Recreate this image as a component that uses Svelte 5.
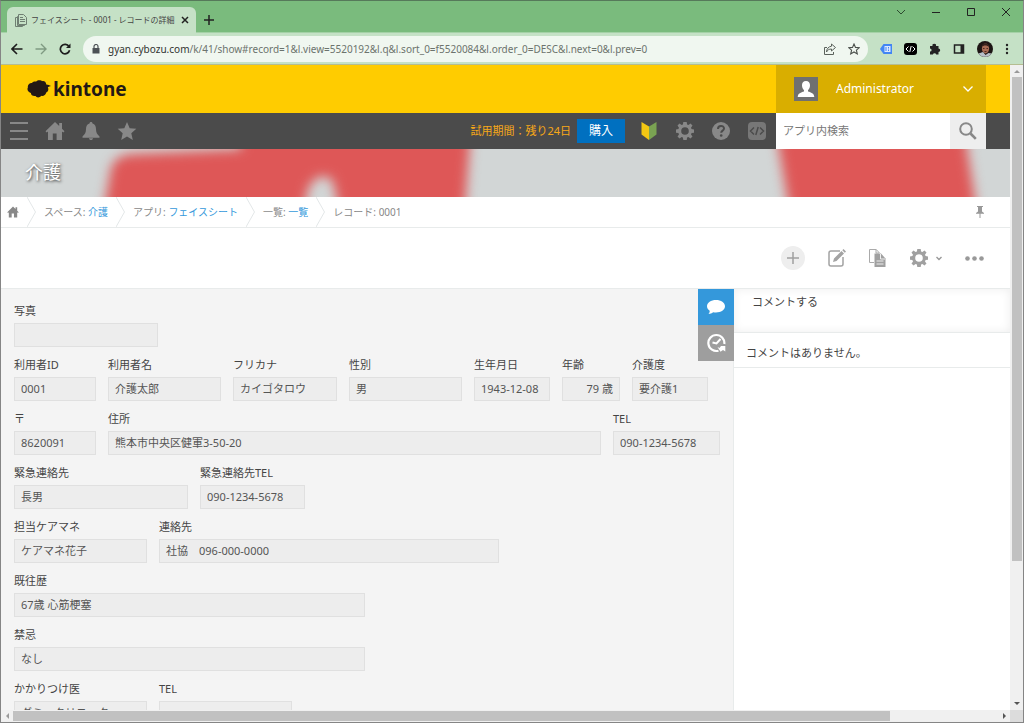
<script>
  const rows = [
    [{ id: 'photo', label: '写真', value: '', width: 144 }],
    [
      { id: 'uid', label: '利用者ID', value: '0001', width: 82 },
      { id: 'name', label: '利用者名', value: '介護太郎', width: 113 },
      { id: 'kana', label: 'フリカナ', value: 'カイゴタロウ', width: 104 },
      { id: 'sex', label: '性別', value: '男', width: 113 },
      { id: 'birth', label: '生年月日', value: '1943-12-08', width: 76 },
      { id: 'age', label: '年齢', value: '79 歳', width: 58, right: true },
      { id: 'level', label: '介護度', value: '要介護1', width: 76 }
    ],
    [
      { id: 'zip', label: '〒', value: '8620091', width: 82 },
      { id: 'address', label: '住所', value: '熊本市中央区健軍3-50-20', width: 493 },
      { id: 'tel', label: 'TEL', value: '090-1234-5678', width: 107 }
    ],
    [
      { id: 'emergency', label: '緊急連絡先', value: '長男', width: 174 },
      { id: 'emergency-tel', label: '緊急連絡先TEL', value: '090-1234-5678', width: 105 }
    ],
    [
      { id: 'manager', label: '担当ケアマネ', value: 'ケアマネ花子', width: 133 },
      { id: 'contact', label: '連絡先', value: '社協　096-000-0000', width: 340 }
    ],
    [{ id: 'history', label: '既往歴', value: '67歳 心筋梗塞', width: 351 }],
    [{ id: 'taboo', label: '禁忌', value: 'なし', width: 351 }],
    [
      { id: 'doctor', label: 'かかりつけ医', value: 'ダミークリニック', width: 133 },
      { id: 'doctor-tel', label: 'TEL', value: '', width: 133 }
    ]
  ];
  const crumbs = [
    { label: 'スペース: ', link: '介護' },
    { label: 'アプリ: ', link: 'フェイスシート' },
    { label: '一覧: ', link: '一覧' },
    { label: 'レコード: 0001' }
  ];
</script>

{#snippet gear(size)}
  <svg width={size} height={size} viewBox="0 0 20 20" aria-hidden="true">
    <path fill="currentColor" fill-rule="evenodd" d="M8.300 1h3.400l.4 2.500 1.300.6 2.100-1.500 2 2-1.500 2.100.6 1.300 2.400.4v3.300l-2.400.4-.6 1.300 1.500 2.100-2 2-2.100-1.500-1.300.6-.4 2.400H8.300l-.4-2.400-1.300-.6-2.100 1.500-2-2L4 13.400l-.6-1.300-2.400-.4V8.400L3.400 8 4 6.700 2.500 4.600l2-2L6.600 4.100l1.300-.6zM10 6.200a3.800 3.800 0 1 0 0 7.600 3.800 3.800 0 0 0 0-7.600z" />
  </svg>
{/snippet}

{#snippet house(size)}
  <svg width={size} height={size} viewBox="0 0 20 20" aria-hidden="true">
    <path fill="currentColor" d="M10 1 .5 10.300l1.200 1.200L3 10.400V19h4.800v-6.500h3.800V19H17v-8.600l1.300 1.100 1.200-1.200L17 7.800V2h-2.800v3.100z" />
  </svg>
{/snippet}

<div class="window">
  <div class="tabstrip">
    <div class="tab">
      <svg width="12" height="13" viewBox="0 0 12 13" fill="none" stroke="#6f7f72"><path d="M3.500.5h5l3 3v7h-8zM3.500 2.500h-1v9h7v-1M2.500 3.500h-2v9h7v-1M5 3.500h3M5 5.500h5M5 7.500h5" /></svg>
      <span class="tab-title">フェイスシート - 0001 - レコードの詳細</span>
      <button aria-label="タブを閉じる"><svg width="8" height="8" viewBox="0 0 8 8" stroke="#222" stroke-width="1.500"><path d="m1 1 6 6M7 1 1 7" /></svg></button>
    </div>
    <button class="new-tab" aria-label="新しいタブ"><svg width="10" height="10" viewBox="0 0 10 10" stroke="#222" stroke-width="1.500"><path d="M5 0v10M0 5h10" /></svg></button>
    <div class="window-buttons">
      <button aria-label="タブを検索"><svg width="10" height="10" viewBox="0 0 10 10" fill="none" stroke="#2d4a30"><path d="m1 3 4 4 4-4" /></svg></button>
      <button aria-label="最小化"><svg width="10" height="10" viewBox="0 0 10 10" stroke="#222"><path d="M1 5.500h8" /></svg></button>
      <button aria-label="最大化"><svg width="10" height="10" viewBox="0 0 10 10" fill="none" stroke="#222"><path d="M1.500 1.500h7v7h-7z" /></svg></button>
      <button aria-label="閉じる"><svg width="10" height="10" viewBox="0 0 10 10" stroke="#222"><path d="m1 1 8 8M9 1 1 9" /></svg></button>
    </div>
  </div>

  <div class="toolbar">
    <button aria-label="戻る"><svg width="12" height="12" viewBox="0 0 12 12" fill="none" stroke="#1d1d1d" stroke-width="1.600"><path d="M11.500 6H1.500M6 1 1 6l5 5" /></svg></button>
    <button aria-label="進む"><svg width="12" height="12" viewBox="0 0 12 12" fill="none" stroke="#7f9a82" stroke-width="1.400"><path d="M.5 6h10M6 1l5 5-5 5" /></svg></button>
    <button aria-label="再読み込み"><svg width="12" height="12" viewBox="0 0 12 12" fill="none" stroke="#1d1d1d" stroke-width="1.700"><path d="M10 3.500A4.700 4.700 0 1 0 10.600 7.300" /><path d="M11.500.5v4.600H7z" fill="#1d1d1d" stroke="none" /></svg></button>
    <div class="omnibox">
      <svg width="8" height="10" viewBox="0 0 8 10"><path d="M.5 4h7v5.500h-7z" fill="#4d5156" /><path d="M2 4V2.500a2 2 0 0 1 4 0V4" fill="none" stroke="#4d5156" stroke-width="1.200" /></svg>
      <span class="url"><b>gyan.cybozu.com</b>/k/41/show#record=1&amp;l.view=5520192&amp;l.q&amp;l.sort_0=f5520084&amp;l.order_0=DESC&amp;l.next=0&amp;l.prev=0</span>
      <button aria-label="共有"><svg width="12" height="12" viewBox="0 0 12 12" fill="none" stroke="#5b625c"><path d="M3 4.500H.5v7h9V9M7.500 1l4 3.500-4 3.500V6C5 6 3.500 7 2.500 9c0-3 2-5.500 5-5.800z" /></svg></button>
      <button aria-label="ブックマーク"><svg width="12" height="12" viewBox="0 0 12 12" fill="none" stroke="#4a4f4b" stroke-width="1.100"><path d="m6 1 1.500 3.400 3.700.4-2.800 2.400.9 3.700L6 9l-3.300 1.900.9-3.700L.8 4.800l3.700-.4z" /></svg></button>
    </div>
    <div class="extensions">
      <button aria-label="ラベル"><svg width="12" height="10" viewBox="0 0 12 10"><path d="M3.500 0H12v10H3.500L0 5z" fill="#4285f4" /><path d="M4.500 2h6v6h-6z" fill="#dbe8ff" /><path d="M6 3v4M8.500 3v1.500M8.500 5.500V7" stroke="#4285f4" /></svg></button>
      <button aria-label="コード"><svg width="13" height="12" viewBox="0 0 13 12"><rect width="13" height="12" rx="3" fill="#000" /><path d="M4.500 3.500 2 6l2.500 2.500M8.500 3.500 11 6 8.500 8.500M7.200 3 5.800 9" fill="none" stroke="#fff" /></svg></button>
      <button aria-label="拡張機能"><svg width="12" height="12" viewBox="0 0 12 12"><path fill="#222" d="M1 3h2.500a1.800 1.800 0 1 1 3.500 0h2.500v2.500a1.700 1.700 0 1 1 0 3.400V11.500H7.200a1.700 1.700 0 0 0-3.300 0H1V8.600a1.600 1.600 0 0 0 0-3.200z" /></svg></button>
      <button aria-label="サイドパネル"><svg width="12" height="12" viewBox="0 0 12 12"><path d="M1.500 2h9v8h-9z" fill="none" stroke="#222" stroke-width="1.500" /><path d="M7.500 2h3v8h-3z" fill="#222" /></svg></button>
      <button aria-label="プロフィール"><svg width="16" height="16" viewBox="0 0 16 16"><circle cx="8" cy="8" r="8" fill="#1c1514" /><ellipse cx="8.500" cy="7.500" rx="3.600" ry="5" fill="#a86c55" /><path d="M4.500 6c0-5 7.500-5 7.600 0-2-2-5.500-2-7.600 0z" fill="#35211c" /><path d="M1.500 12.500 6 11l2.500 3 3-2 3 .5A8 8 0 0 1 1.500 12.500z" fill="#b8c0c8" /><path d="M6 7.500h1.500M9.500 7.500H11M7.500 10.500h2" stroke="#4d2b22" /></svg></button>
      <button aria-label="メニュー"><svg width="4" height="12" viewBox="0 0 4 12" fill="#222"><circle cx="2" cy="2" r="1.200" /><circle cx="2" cy="6" r="1.200" /><circle cx="2" cy="10" r="1.200" /></svg></button>
    </div>
  </div>

  <div class="viewport">
    <div class="page">
      <header class="brandbar">
        <a class="logo" href="#top">
          <svg width="24" height="18" viewBox="0 0 24 18" aria-hidden="true"><path fill="#231815" d="M5 3C6 1.300 8.500 1.200 9.200 1.600 10.500-.4 14.500.1 15 1.200c2-.6 4 .6 4.300 3.200 2 .3 3 .6 4.700 1.700-1.200.4-2.300.7-3.200 1.100 1.200 2.300.3 4.800-1.600 5.300-.5 2.800-3.300 4-5 3.200-1.300 2.300-4.800 2.200-5.600.3-2.700.6-4.700-1.100-4.700-3C.5 12.400-.1 9 .9 7.500.2 4.700 3 2.600 5 3z" /></svg>
          <span>kintone</span>
        </a>
        <button class="account">
          <svg width="24" height="24" viewBox="0 0 24 24" aria-hidden="true"><path fill="#707070" d="M0 0h24v24H0z" /><path fill="#fff" d="M12 4c2.600 0 4.200 1.800 4 4.500-.1 2-.9 3.700-2 4.700v1.300c3 1 6 1.500 6.300 5.500H3.700C4 16 7 15.500 10 14.500v-1.300c-1.100-1-1.900-2.700-2-4.700C7.800 5.800 9.400 4 12 4z" /></svg>
          <span>Administrator</span>
          <svg width="10" height="6" viewBox="0 0 10 6" fill="none" stroke="#fff" stroke-width="1.300"><path d="m.5.5 4.500 4.500L9.500.5" /></svg>
        </button>
      </header>

      <nav class="globalnav">
        <button aria-label="メニュー"><svg width="20" height="20" viewBox="0 0 20 20" stroke="#888" stroke-width="2"><path d="M1 2h18M1 10h18M1 18h18" /></svg></button>
        <button aria-label="ポータル">{@render house(20)}</button>
        <button aria-label="通知"><svg width="20" height="20" viewBox="0 0 20 20" fill="currentColor"><path d="M10 1c1 0 1.500.6 1.500 1.500C14 3.300 15 5.500 15 8c0 3.500 1 5 3.500 7.500v1.300h-17v-1.300C4 13 5 11.500 5 8c0-2.500 1-4.700 3.500-5.500C8.500 1.600 9 1 10 1zM8 17.300h4c0 2.400-4 2.400-4 0z" /></svg></button>
        <button aria-label="ブックマーク"><svg width="20" height="20" viewBox="0 0 20 20" fill="currentColor"><path d="m10 1 2.700 6.200 6.600.6-5 4.500 1.500 6.700-5.800-3.500L4.200 19l1.500-6.700-5-4.500 6.600-.6z" /></svg></button>
        <div class="nav-right">
          <span class="trial">試用期間：残り24日</span>
          <button class="buy">購入</button>
          <div class="nav-icons">
            <button aria-label="はじめに"><svg width="16" height="18" viewBox="0 0 16 18"><path fill="#f3c713" d="M.5 0 8 4.500V18L.5 12.500z" /><path fill="#7aa352" d="M15.500 0 8 4.500V18l7.500-5.500z" /></svg></button>
            <button aria-label="設定">{@render gear(20)}</button>
            <button aria-label="ヘルプ"><svg width="18" height="18" viewBox="0 0 18 18"><circle cx="9" cy="9" r="9" fill="#888" /><path d="M6 7c0-4 6-4 6-.6 0 2.200-2.800 2.200-2.800 4.400" fill="none" stroke="#4b4b4b" stroke-width="2" /><circle cx="9.200" cy="13.500" r="1.300" fill="#4b4b4b" /></svg></button>
            <button aria-label="開発者"><svg width="18" height="18" viewBox="0 0 18 18"><rect width="18" height="18" rx="4" fill="#777" /><path d="M6 5.500 2.500 9 6 12.500M12 5.500 15.500 9 12 12.500M10.200 5 7.800 13" fill="none" stroke="#4b4b4b" stroke-width="1.500" /></svg></button>
          </div>
          <div class="search">
            <input type="text" placeholder="アプリ内検索" aria-label="アプリ内検索" />
            <button aria-label="検索"><svg width="18" height="18" viewBox="0 0 18 18" fill="none" stroke="#888"><circle cx="7" cy="7" r="5.800" stroke-width="2" /><path d="m11.500 11.500 5.300 5.300" stroke-width="2.600" /></svg></button>
          </div>
        </div>
      </nav>

      <div class="cover">
        <svg class="cover-art" viewBox="0 0 1010 48" preserveAspectRatio="none" aria-hidden="true">
          <g fill="#de5757">
            <path d="M98 90 110 20Q114 6 132 5L240 0V-40H472L462 90H345L332 32Q320 20 308 38L296 90z" />
            <path d="M772-40 794 90H981L961-40z" />
          </g>
        </svg>
        <h1>介護</h1>
      </div>

      <nav class="breadcrumb" aria-label="パンくず">
        <a class="crumb-home" href="#portal" aria-label="ポータル">{@render house(12)}</a>
        {#each crumbs as crumb}
          <svg class="divider" width="9" height="30" viewBox="0 0 9 30" fill="none" stroke="#e3e7e8"><path d="m0 0 8.500 15L0 30" /></svg>
          <span>{crumb.label}{#if crumb.link}<a href="#item">{crumb.link}</a>{/if}</span>
        {/each}
        <button class="pin" aria-label="固定"><svg width="8" height="12" viewBox="0 0 8 12" fill="#999"><path d="M1 0h6v1H6v4.500L8 7v.8H4.500V12h-1V7.800H0V7l2-1.500V1H1z" /></svg></button>
      </nav>

      <div class="actions">
        <button class="add" aria-label="追加"><svg width="12" height="12" viewBox="0 0 12 12" stroke="#a0a0a0" stroke-width="1.500"><path d="M6 0v12M0 6h12" /></svg></button>
        <button aria-label="編集"><svg width="18" height="18" viewBox="0 0 18 18"><path d="M12 2H3Q1 2 1 4v11q0 2 2 2h10q2 0 2-2V8" fill="none" stroke="#a3a3a3" stroke-width="1.500" /><path d="m5 13 1-3.500L13.500 2 16 4.500 8.500 12zM14.300 1.300 15.500 0 18 2.500l-1.200 1.200z" fill="#a3a3a3" /></svg></button>
        <button aria-label="再利用"><svg width="17" height="18" viewBox="0 0 17 18"><path d="M5 13.500H.5V.5h6.700L10.500 4M7 .5V4h3" fill="none" stroke="#aaa" /><path d="M5.500 4.500H12l4.500 5V18h-11z" fill="#a0a0a0" /><path d="M11.500 5v5H16M7.500 12h7M7.500 15h7" stroke="#eee" fill="none" /></svg></button>
        <button class="settings" aria-label="アプリの設定">{@render gear(20)}<svg width="6" height="5" viewBox="0 0 6 5" fill="none" stroke="#999" stroke-width="1.400"><path d="m.5 1 2.500 2.500L5.500 1" /></svg></button>
        <button aria-label="その他"><svg width="19" height="5" viewBox="0 0 19 5" fill="#999"><circle cx="2.500" cy="2.500" r="2.300" /><circle cx="9.500" cy="2.500" r="2.300" /><circle cx="16.500" cy="2.500" r="2.300" /></svg></button>
      </div>

      <main class="content">
        <form class="record">
          {#each rows as row}
            <div class="row">
              {#each row as field}
                <div class="field" style:width="{field.width}px">
                  <label for={field.id}>{field.label}</label>
                  <input id={field.id} class:right={field.right} value={field.value} readonly />
                </div>
              {/each}
            </div>
          {/each}
        </form>
        <aside class="comments">
          <div class="side-tabs">
            <button class="active" aria-label="コメント"><svg width="18" height="16" viewBox="0 0 18 16"><path fill="#fff" d="M9 1c5 0 9 2.700 9 6.300s-4 6.200-9 6.200c-1 0-2-.1-2.900-.3-1.200 1-2.800 1.700-4.600 1.800.8-.8 1.300-1.900 1.200-3.200C1 10.700 0 9.100 0 7.300 0 3.700 4 1 9 1z" /></svg></button>
            <button aria-label="変更履歴"><svg width="19" height="20" viewBox="0 0 19 20"><path d="M11.500 17.700A8 8 0 1 1 17.300 11" fill="none" stroke="#fff" stroke-width="2.200" /><path d="m10.500 14 2 1 1.500-2h4.300v5.500L16 17l-2.500 1.800z" fill="#fff" /><path d="m5.500 9.500 4 1L13.500 6" fill="none" stroke="#fff" stroke-width="2" /></svg></button>
          </div>
          <button class="comment-box">コメントする</button>
          <p>コメントはありません。</p>
        </aside>
      </main>
    </div>

    <div class="vbar" aria-hidden="true">
      <svg width="8" height="12" viewBox="0 0 8 12"><path fill="#999" d="M1 8h6L4 5z" /></svg>
      <div class="vtrack"><div class="vthumb"></div></div>
      <svg width="8" height="12" viewBox="0 0 8 12"><path fill="#555" d="M1 4h6L4 7z" /></svg>
    </div>
  </div>
  <div class="hbar" aria-hidden="true">
    <svg width="12" height="8" viewBox="0 0 12 8"><path fill="#999" d="M8 1v6L5 4z" /></svg>
    <div class="htrack"><div class="hthumb"></div></div>
    <svg width="12" height="8" viewBox="0 0 12 8"><path fill="#555" d="M5 1v6l3-3z" /></svg>
    <div class="corner"></div>
  </div>
</div>

<style>
  :global(body) { margin: 0; }
  .window {
    box-sizing: border-box;
    height: 100vh;
    display: flex;
    flex-direction: column;
    overflow: hidden;
    border: 1px solid #858585;
    border-top-color: #56795a;
    background: #fff;
    color: #444;
    font: 11px/20px "Noto Sans", "Noto Sans CJK JP", sans-serif;
  }
  .window :global(*) { box-sizing: border-box; }
  .window :global(svg) { display: block; flex: none; }
  button {
    display: flex;
    align-items: center;
    justify-content: center;
    margin: 0;
    padding: 0;
    border: 0;
    background: none;
    color: inherit;
    font: inherit;
    cursor: pointer;
  }
  a { color: #3498db; text-decoration: none; }

  .tabstrip {
    flex: none;
    height: 32px;
    display: flex;
    align-items: flex-end;
    background: #7abb7d;
    border-bottom: 1px solid #a5d1a7;
  }
  .tab {
    height: 26px;
    margin: 0 0 -1px 6px;
    padding: 0 5px 0 8px;
    display: flex;
    align-items: center;
    gap: 4px;
    border-radius: 6px 6px 0 0;
    background: #c5e1c6;
  }
  .tab-title { white-space: nowrap; font-size: 8px; }
  .tab button { width: 12px; height: 12px; }
  .new-tab { width: 10px; height: 24px; margin-left: 8px; }
  .window-buttons { align-self: flex-start; margin-left: auto; display: flex; gap: 4px; padding-right: 2px; }
  .window-buttons button { width: 31px; height: 22px; }

  .toolbar {
    flex: none;
    height: 32px;
    display: flex;
    align-items: center;
    gap: 12px;
    padding: 0 14px 0 10px;
    background: #c5e1c6;
    border-bottom: 1px solid #b5bd91;
  }
  .omnibox {
    flex: 1;
    min-width: 0;
    height: 26px;
    display: flex;
    align-items: center;
    gap: 12px;
    padding: 0 8px 0 9px;
    border-radius: 13px;
    background: #f0f7f0;
  }
  .url { flex: 1; min-width: 0; margin-left: -4px; overflow: hidden; white-space: nowrap; color: #6c736d; font-size: 10px; }
  .url b { font-weight: 400; color: #303331; }
  .extensions { display: flex; align-items: center; gap: 12px; }

  .viewport { flex: 1; min-height: 0; display: flex; }
  .page { flex: 1; min-width: 0; overflow: hidden; }

  .brandbar {
    height: 48px;
    display: flex;
    justify-content: space-between;
    padding: 0 24px 0 26px;
    background: #ffcc00;
  }
  .logo { display: flex; align-items: center; gap: 2px; color: #231815; font-size: 19px; font-weight: 700; }
  .account {
    width: 210px;
    justify-content: flex-start;
    gap: 18px;
    padding: 0 13px 0 18px;
    background: #d9ae00;
    color: #fff;
    font-size: 12px;
  }
  .account span { flex: 1; text-align: left; }

  .globalnav {
    height: 36px;
    display: flex;
    align-items: center;
    gap: 16px;
    padding: 0 24px 0 8px;
    background: #4b4b4b;
    color: #888;
  }
  .nav-right { margin-left: auto; display: flex; align-items: center; height: 100%; }
  .trial { margin-right: 6px; color: #f7a817; white-space: nowrap; }
  .buy { width: 48px; height: 24px; background: #0070c0; color: #fff; font-size: 12px; }
  .nav-icons { display: flex; gap: 18px; padding: 0 10px 0 15px; }
  .nav-icons button { width: 18px; height: 20px; }
  .search { width: 210px; height: 100%; display: flex; }
  .search input {
    flex: 1;
    min-width: 0;
    padding: 0 7px;
    border: 0;
    border-radius: 0;
    background: #fff;
    font: inherit;
  }
  .search input::placeholder { color: #777; opacity: 1; }
  .search button { width: 36px; background: #eee; }

  .cover { position: relative; height: 48px; padding: 0 24px; background: #d2d6d6; overflow: hidden; }
  .cover-art { position: absolute; inset: 0; width: 100%; height: 100%; overflow: visible; filter: blur(6px); }
  .cover h1 {
    position: relative;
    margin: 0;
    color: #fff;
    font-size: 18px;
    font-weight: 400;
    line-height: 46px;
    text-shadow: 1px 1px 3px #333;
  }

  .breadcrumb {
    height: 31px;
    display: flex;
    align-items: center;
    gap: 8px;
    padding: 0 26px 0 6px;
    border-bottom: 1px solid #e8ebeb;
    color: #888;
    font-size: 10px;
    white-space: nowrap;
  }
  .crumb-home { color: #888; }
  .pin { margin-left: auto; }

  .actions {
    height: 61px;
    display: flex;
    align-items: center;
    justify-content: flex-end;
    gap: 23px;
    padding: 0 26px 0 0;
    border-bottom: 1px solid #e8ebeb;
    color: #a0a0a0;
  }
  .add { width: 24px; height: 24px; border-radius: 50%; background: #eee; }
  .settings { gap: 7px; }

  .content { display: flex; min-height: 480px; }
  .record {
    flex: 1;
    min-width: 0;
    padding: 12px 13px;
    display: flex;
    flex-direction: column;
    gap: 8px;
    background: #f4f4f4;
    color: #444;
  }
  .row { display: flex; gap: 12px; }
  .field { flex: none; }
  .field label { display: block; height: 20px; margin-bottom: 2px; white-space: nowrap; }
  .field input {
    display: block;
    width: 100%;
    height: 24px;
    padding: 0 6px 2px;
    border: 1px solid #e0e0e0;
    border-radius: 0;
    background: #ededed;
    color: #555;
    font: inherit;
  }
  .field input.right { text-align: right; }

  .comments { position: relative; flex: none; width: 277px; border-left: 1px solid #e8ebeb; }
  .side-tabs { position: absolute; top: 0; right: 100%; }
  .side-tabs button { width: 36px; height: 36px; background: #9e9e9e; }
  .side-tabs .active { background: #3498db; }
  .comment-box {
    width: 100%;
    height: 44px;
    align-items: flex-start;
    justify-content: flex-start;
    padding: 3px 18px;
    border-bottom: 1px solid #e8ebeb;
    box-shadow: inset 0 0 10px #eee;
  }
  .comments p { height: 35px; margin: 0; padding: 10px 12px 0; border-bottom: 1px solid #e8ebeb; }

  .vbar { flex: none; width: 13px; display: flex; flex-direction: column; align-items: center; background: #f0f0f0; }
  .vtrack { flex: 1; width: 10px; }
  .vthumb { height: 78%; background: #c1c1c1; }
  .hbar { flex: none; height: 12px; display: flex; align-items: center; background: #f0f0f0; }
  .htrack { flex: 1; height: 10px; }
  .hthumb { width: 89%; height: 100%; background: #c1c1c1; }
  .corner { width: 13px; height: 100%; background: #dcdcdc; }
</style>
